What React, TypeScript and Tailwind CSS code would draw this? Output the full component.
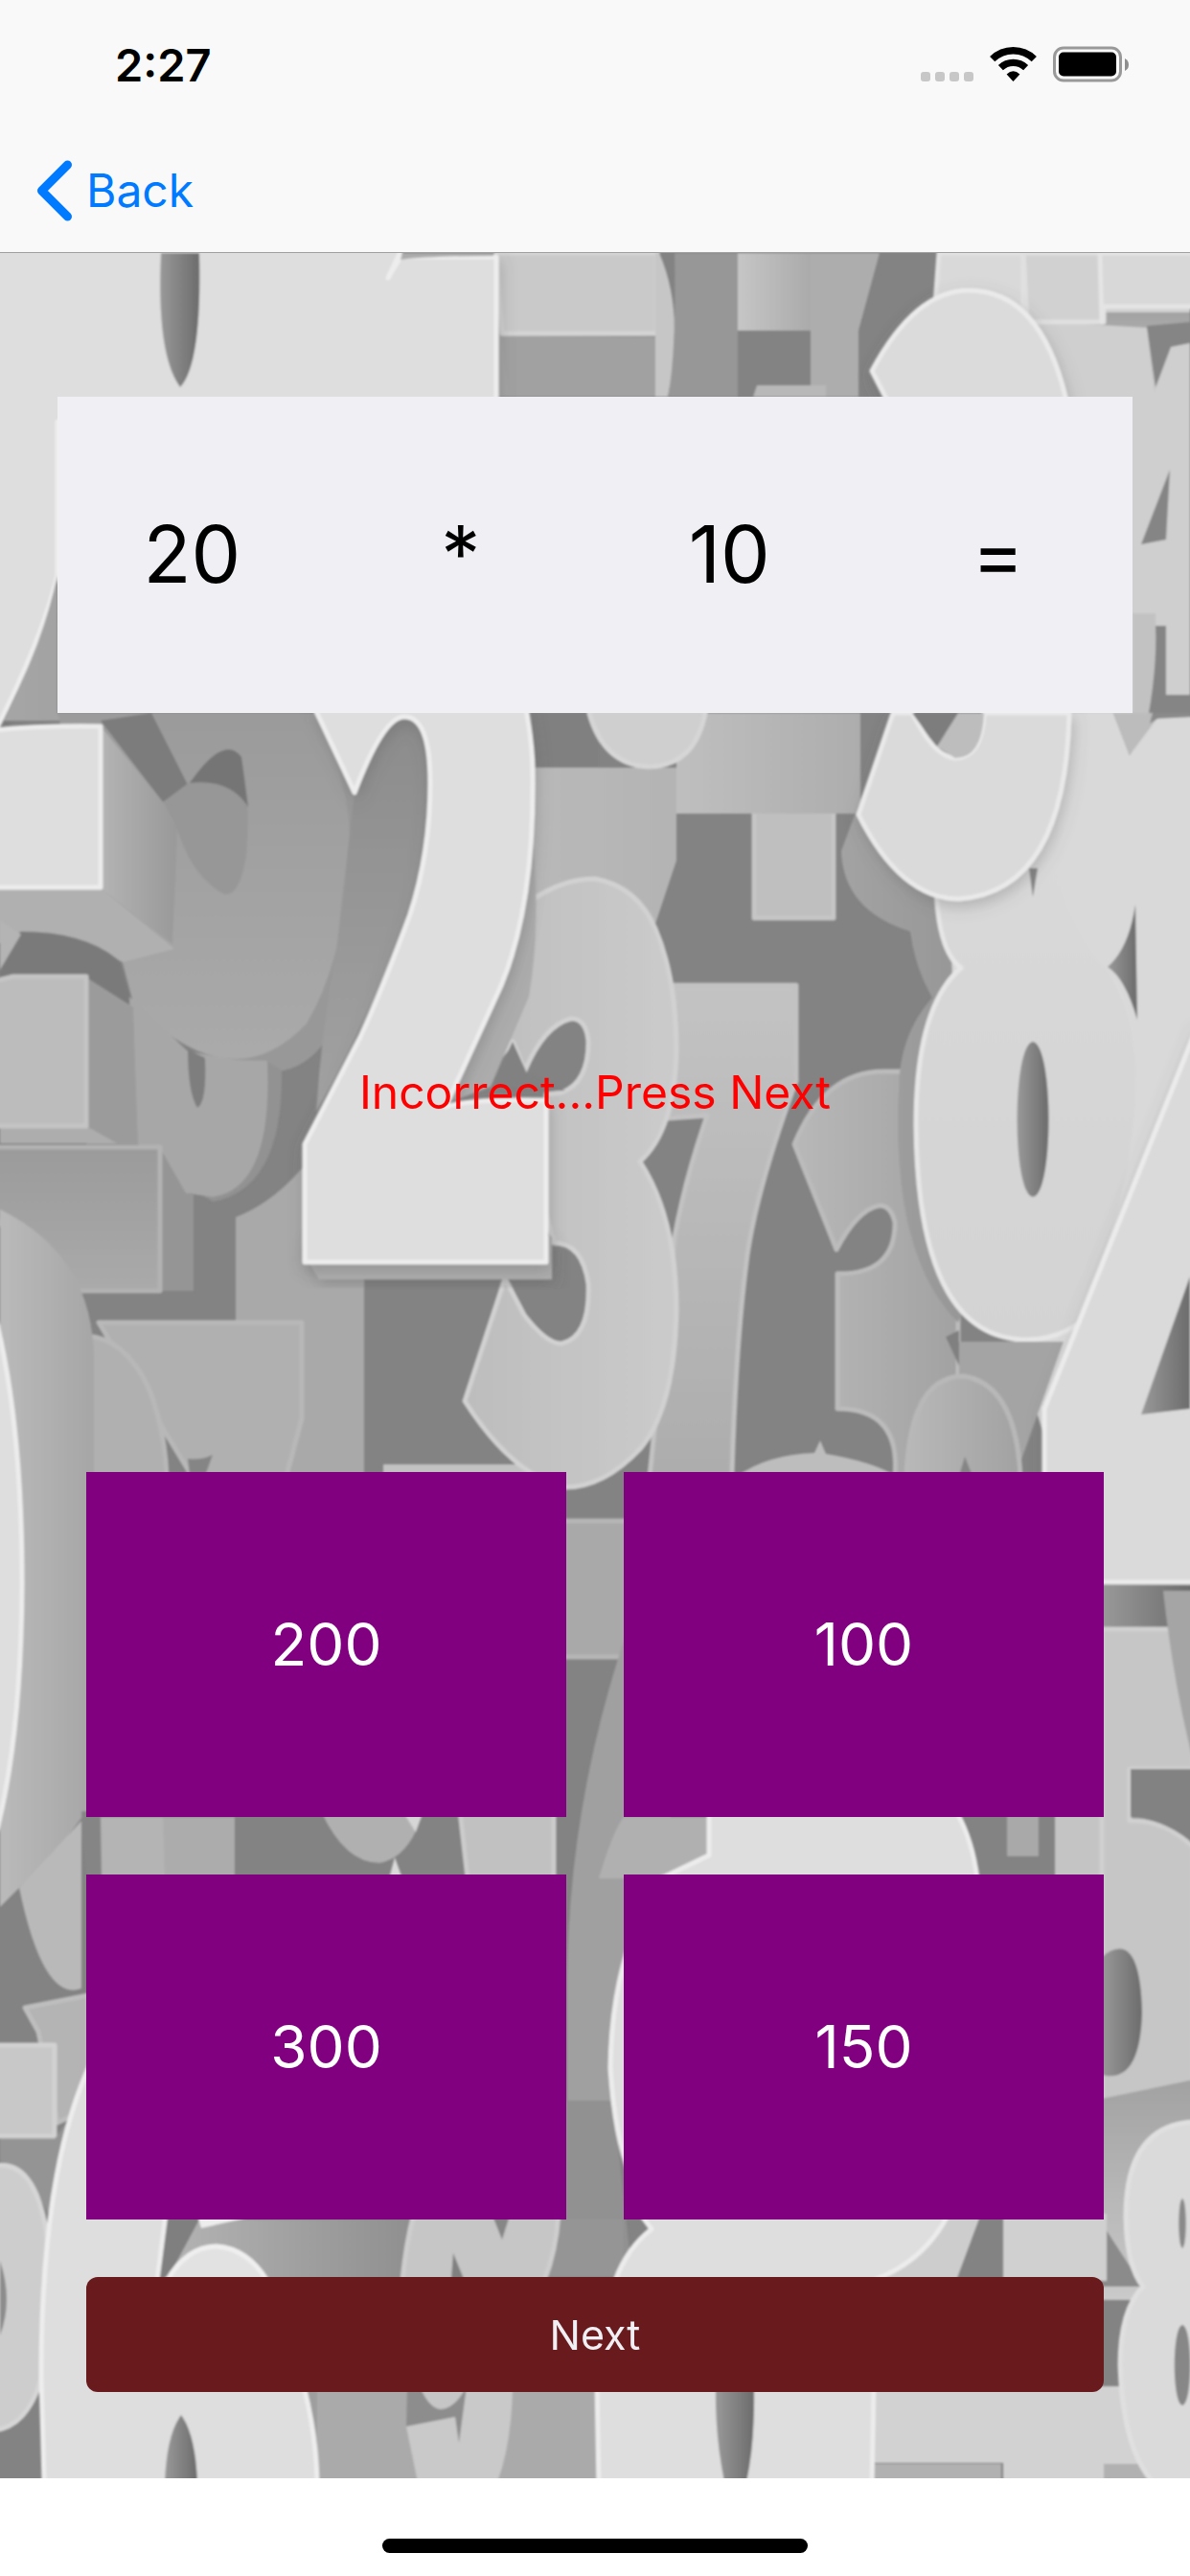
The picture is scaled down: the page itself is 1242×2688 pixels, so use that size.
import React from "react";

type Piece = { d: string; fill: string; edge?: string; shadow?: boolean };

// Sculpted numerals of the backdrop, listed from the back to the front.
const PIECES: Piece[] = [
  // top right clutter
  { d: "M518 264H686V414H518Z", fill: "url(#mid)" },
  { d: "M518 264H686V348H524Z", fill: "#c9c9c9", edge: "#d4d4d4" },
  { d: "M524 352H686V414H531Z", fill: "#a1a1a1" },
  { d: "M688 264Q704 300 704 345Q704 385 697 414H684V264Z", fill: "#c6c6c6" },
  { d: "M704 264H770V414H697Q706 370 704 264Z", fill: "#979797" },
  { d: "M770 264H850V345H770Z", fill: "url(#lightToMid)" },
  { d: "M846 264H918L896 345V414H846Z", fill: "#adadad" },
  { d: "M790 402H862V414H786Z", fill: "#b8b8b8" },
  { d: "M1068 264H1242V744H1100Z", fill: "#cfcfcf" },
  { d: "M1080 335H1150V326H1242V350L1222 362L1205 410L1197 342Z", fill: "url(#downFade)" },
  { d: "M1197 340L1242 336V358L1222 362L1206 404Z", fill: "#858585" },
  { d: "M980 264H1068V345H974Z", fill: "#d9d9d9", edge: "#e2e2e2" },
  { d: "M1068 264H1152V336H1072Z", fill: "#d1d1d1", edge: "#e0e0e0" },
  { d: "M1148 264H1246V320H1150V336Z", fill: "#d8d8d8", edge: "#e4e4e4" },
  { d: "M1221 490L1217 563L1191 568Z", fill: "#858585" },
  { d: "M1182 640H1206Q1208 700 1200 760H1182Z", fill: "#c2c2c2" },
  { d: "M1206 653H1217V725H1242V760H1196Q1208 700 1206 653Z", fill: "#858585" },
  {
    d: "M924 414L910 387Q955 303 1011 303Q1085 303 1112 414V430H930Z",
    fill: "#dbdbdb",
    edge: "#eaeaea",
    shadow: true,
  },
  // upper left numeral
  {
    d: "M-6 258H420L405 290L418 268H518V440H60V600Q45 665 -6 765Z",
    fill: "#dedede",
    edge: "#ededed",
    shadow: true,
  },
  { d: "M420 264H515V267Q450 267 418 271Z", fill: "#ababab" },
  { d: "M168 264H208Q211 380 188 404Q163 370 168 264Z", fill: "url(#hole)" },
  // wedge between the numeral and the prompt panel
  { d: "M60 600V744H400V1000H150L100 752H4Q45 670 60 600Z", fill: "url(#mid)" },

  // grey ring on the left
  { d: "M330 744L378 840V960Q360 1110 290 1118L230 1105Z", fill: "#989898" },
  {
    d: "M60 744H331Q370 830 364 893Q360 1000 320 1068Q285 1105 246 1105Q194 1105 139 1046L100 900Z",
    fill: "url(#ring)",
  },
  { d: "M105 752L158 744L196 819L170 837Z", fill: "#7b7b7b" },
  { d: "M170 837L198 816Q234 770 253 796Q262 842 257 893Q250 936 234 933Q200 915 185 865Z", fill: "#979797" },
  { d: "M198 817Q234 765 252 790L259 842Q240 812 198 817Z", fill: "#757575" },
  { d: "M105 758L170 837L185 865L180 985L104 926Z", fill: "url(#sideFade)" },
  { d: "M-4 926H104L182 990L128 1004Q60 970 -4 985Z", fill: "#b0b0b0" },
  { d: "M-6 762Q40 757 105 758V926H-6Z", fill: "#dedede", edge: "#ececec" },
  { d: "M0 985L22 972Q90 972 125 1003L140 1052L93 1022H0Z", fill: "#7a7a7a" },
  { d: "M0 960L22 975L0 1012Z", fill: "#b4b4b4" },

  // thin ring under it
  { d: "M278 1107L294 1117Q296 1240 222 1254L200 1240Z", fill: "#929292" },
  { d: "M135 1040L196 1097L246 1106L279 1107Q285 1240 222 1249L194 1245L140 1190Z", fill: "#a7a7a7" },
  { d: "M196 1095L214 1104Q216 1150 206 1156Q196 1140 196 1095Z", fill: "#7e7e7e" },
  { d: "M90 1020L139 1051L144 1194H90Z", fill: "#9b9b9b" },
  { d: "M0 1175H90L122 1193H0Z", fill: "#adadad" },
  { d: "M-6 1024L14 1019H90V1175H-6Z", fill: "#bcbcbc", edge: "#c4c4c4" },
  { d: "M166 1196L194 1245H202V1347H166Z", fill: "#959595" },
  { d: "M-6 1197H167V1347H60L-6 1270Z", fill: "url(#ring)", edge: "#b2b2b2" },

  // angular pieces lower left
  { d: "M317 1217L380 1335V1540H246V1270Q285 1255 317 1217Z", fill: "#a9a9a9" },
  { d: "M103 1380H315V1480L299 1540H200Z", fill: "#b0b0b0", edge: "#b8b8b8" },
  { d: "M90 1394Q130 1396 155 1448Q172 1490 174 1540H90Z", fill: "#b0b0b0", edge: "#b8b8b8" },
  { d: "M196 1522Q210 1524 222 1518L214 1540H198Z", fill: "#858585" },
  { d: "M0 1262Q98 1310 98 1420V1880L60 1930L0 1990Z", fill: "url(#tube)" },
  { d: "M-6 1370Q23 1480 23 1653Q22 1820 -6 1920Z", fill: "#dedede", edge: "#ececec" },

  // middle column
  { d: "M556 744H625V801H556Z", fill: "#808080" },
  { d: "M552 801H706V898L684 964V1010H545Z", fill: "url(#lightToMidR)" },
  { d: "M787 840H870V958H787Z", fill: "#bfbfbf", edge: "#c6c6c6" },
  { d: "M706 744H898V849H706Z", fill: "url(#plus)" },
  { d: "M676 682A58 58 0 0 1 736 744Q725 800 676 800Q630 798 615 744Z", fill: "#cfcfcf", edge: "#d6d6d6" },
  {
    d: "M690 1028H831V1128Q790 1240 780 1310Q768 1400 764 1540H678L704 1291Q715 1230 738 1164L698 1167Z",
    fill: "url(#seven)",
    edge: "#c2c2c2",
  },
  { d: "M400 1528H600V1545H400Z", fill: "#c2c2c2" },
  {
    d: "M541 950Q580 917 621 917Q665 925 684 969Q706 1020 706 1097Q704 1180 668 1212Q706 1270 706 1367Q704 1470 668 1512Q630 1552 590 1552Q535 1540 485 1462L527 1334L547 1372Q570 1402 586 1402Q616 1395 614 1340Q608 1297 578 1297L560 1230L570 1142L586 1140Q614 1130 614 1087Q612 1063 596 1063Q568 1070 548 1117L535 1087L500 1130Z",
    fill: "url(#three)",
    edge: "#d1d1d1",
  },
  { d: "M535 1087L550 1120L590 1138L510 1140Z", fill: "#818181" },
  { d: "M554 850Q566 960 552 1040L512 1134L470 1150Z", fill: "#acacac" },

  // right centre
  {
    d: "M829 1194Q860 1118 922 1118H1000V1400L1000 1540H934Q940 1470 874 1470V1329Q934 1330 934 1276Q930 1258 918 1258Q895 1262 873 1304Z",
    fill: "url(#small)",
    edge: "#bbbbbb",
  },
  { d: "M932 744L878 888Q880 950 950 972Q955 1010 973 1041Q938 1080 938 1138Q930 1310 1000 1380L1080 1200V900Z", fill: "url(#under)" },
  { d: "M1116 744H1162L1179 788L1203 750L1246 748V1500H1090L1000 1200L990 900Z", fill: "#d9d9d9" },
  {
    d: "M977 900Q975 990 1003 1010Q956 1050 956 1174Q958 1398 1072 1398Q1190 1395 1192 1168Q1190 1050 1156 1009L1090 820Z",
    fill: "url(#eight)",
    edge: "#e6e6e6",
  },
  { d: "M1080 800L1246 790V1110L1115 1390Q1190 1250 1185 1100Q1175 1030 1152 1009Q1100 960 1080 800Z", fill: "#d9d9d9" },
  { d: "M1156 1009Q1178 990 1185 944L1187 1064Q1174 1020 1156 1009Z", fill: "url(#hole)" },
  { d: "M1162 744H1212L1179 788Z", fill: "#bcbcbc" },
  { d: "M1203 744H1242V748H1211L1200 755Z", fill: "#8a8a8a" },
  { d: "M1074 906H1083L1078 936Z", fill: "#858585" },
  { d: "M1078 1087C1100 1090 1100 1247 1078 1249C1056 1247 1056 1090 1078 1087Z", fill: "url(#hole)" },
  {
    d: "M932 744L896 850Q940 938 1001 938Q1112 930 1116 744H1027Q1025 791 997 791Q975 790 952 744Z",
    fill: "#dadada",
    edge: "#e9e9e9",
    shadow: true,
  },
  { d: "M952 744H1000L977 778Z", fill: "#7d7d7d" },
  { d: "M1000 744H1027Q1025 791 997 791L978 779Z", fill: "#bdbdbd" },
  { d: "M1001 1400H1110L1060 1540H1001Z", fill: "#a4a4a4" },
  { d: "M987 1395L1001 1388V1425Z", fill: "#808080" },
  { d: "M946 1540Q950 1436 1006 1436Q1060 1445 1065 1540Z", fill: "url(#small)", edge: "#b8b8b8" },
  { d: "M1007 1520L1015 1540H1001Z", fill: "#858585" },
  { d: "M770 1540Q800 1518 850 1516L856 1503L862 1517Q910 1525 935 1540Z", fill: "#bdbdbd" },
  {
    d: "M1250 1070L1090 1470V1651H1250Z",
    fill: "#dadada",
    edge: "#ebebeb",
    shadow: true,
  },
  { d: "M1242 1332L1191 1476L1242 1470Z", fill: "url(#hole)" },

  // large two
  { d: "M370 827Q400 748 422 748Q449 750 449 817Q450 900 428 954Q376 1082 330 1160Q335 1080 350 1000Z", fill: "url(#shade)" },
  { d: "M318 1310L333 1335H576V1290H318Z", fill: "#adadad", shadow: true },
  {
    d: "M328 738H549Q556 780 556 806Q558 960 515 1046L465 1155Q490 1146 570 1148V1317H318V1194L376 1082Q400 1030 428 954Q449 890 449 817Q449 748 422 748Q400 748 370 827Z",
    fill: "#dedede",
    edge: "#ededed",
    shadow: true,
  },

  // left strip beside the answers
  { d: "M85 1890H106V1990Q88 1980 85 1890Z", fill: "#858585" },
  { d: "M20 1970L85 1900V2075Q45 2090 20 1970Z", fill: "#b9b9b9" },
  { d: "M26 2095L92 2082V2200L60 2215L40 2120Z", fill: "#b4b4b4", edge: "#bebebe" },
  { d: "M-6 2134H57V2229H-6Z", fill: "#c8c8c8", edge: "#d2d2d2" },
  { d: "M0 2232H57L71 2212L50 2310Q30 2262 0 2255Z", fill: "#949494" },
  { d: "M-6 2260Q52 2250 54 2400Q50 2530 -6 2536Z", fill: "#cdcdcd", edge: "#d6d6d6" },
  { d: "M0 2359Q14 2400 0 2437Z", fill: "#8c8c8c" },

  // band between the answer rows
  { d: "M105 1896H172V1960H106Z", fill: "#b4b4b4" },
  { d: "M170 1896H245V1960H172Z", fill: "#acacac" },
  { d: "M335 1890Q360 1944 396 1944Q420 1940 434 1911L420 1890Z", fill: "#b0b0b0" },
  { d: "M420 1890H442L434 1912Z", fill: "#d6d6d6" },
  { d: "M412 1938L420 1960H406Z", fill: "#dadada" },
  { d: "M480 1890H578V1960H488Z", fill: "#c1c1c1", edge: "#cccccc" },

  // gutter between the answer columns
  { d: "M585 1587H655V1729H585Z", fill: "#a9a9a9", edge: "#b6b6b6" },
  { d: "M655 1700Q594 1880 592 2060V2192H700V1700Z", fill: "#a0a0a0" },
  { d: "M585 2192H640L660 2376H585Z", fill: "#919191" },
  { d: "M651 1896H740V1960H625Q640 1910 651 1896Z", fill: "#b0b0b0" },
  { d: "M740 1890H998Q1015 1920 1020 1960H690L740 1936Z", fill: "#dedede", edge: "#ececec" },
  { d: "M1051 1890H1084V1937H1051Z", fill: "#a9a9a9" },
  { d: "M1101 1890H1160V1960H1101Z", fill: "#c4c4c4" },
  { d: "M660 2020Q638 2080 637 2158Q642 2235 660 2275Z", fill: "#dedede", edge: "#ececec" },

  // right strip beside the answers
  { d: "M1150 1654H1246V1700H1150Z", fill: "url(#hole)" },
  { d: "M1150 1700H1246V1846H1179V1900Q1215 1898 1246 1928V2260H1150Z", fill: "#c6c6c6", edge: "#d0d0d0" },
  { d: "M1214 1660H1246V1840Q1225 1760 1214 1660Z", fill: "#a5a5a5" },
  { d: "M1180 1846H1246V1924Q1215 1898 1180 1896Z", fill: "#828282" },
  { d: "M1150 2042Q1190 2010 1192 2100Q1190 2175 1150 2165Z", fill: "url(#hole)" },
  { d: "M1150 2190L1246 2170V2400H1150Z", fill: "url(#downFade)" },
  { d: "M1150 2320L1193 2386H1150Z", fill: "#8b8b8b" },

  // lower edge
  { d: "M172 2316H440V2590H172Z", fill: "url(#lower)" },
  { d: "M331 2490H623V2590H331Z", fill: "#aaaaaa" },
  { d: "M582 2316H650V2376H572Z", fill: "#959595" },
  { d: "M172 2316H208L176 2376H164Z", fill: "#7f7f7f" },
  { d: "M206 2312L210 2325L268 2312Z", fill: "#ededed" },
  { d: "M432 2310H583Q580 2350 568 2380H420Q424 2340 432 2310Z", fill: "#c6c6c6", edge: "#cecece" },
  { d: "M514 2312H532L524 2337Z", fill: "#868686" },
  { d: "M473 2351L484 2378H471Z", fill: "#808080" },
  { d: "M96 2150Q43 2260 43 2480L46 2590H331Q330 2540 317 2490L164 2380L173 2310V2150Z", fill: "#dedede", edge: "#ededed" },
  { d: "M174 2380Q195 2344 226 2344Q258 2346 279 2380Z", fill: "#e2e2e2", edge: "#efefef" },
  { d: "M189 2520Q204 2540 206 2590H172Q174 2540 189 2520Z", fill: "url(#hole)" },
  { d: "M425 2490H490L479 2552L475 2522L424 2532Z", fill: "#8d8d8d" },
  { d: "M438 2490Q448 2514 461 2514Q476 2512 487 2490Z", fill: "#c6c6c6" },
  { d: "M487 2490H535Q534 2550 519 2590H436L424 2532L475 2522L479 2549Z", fill: "#c9c9c9" },
  { d: "M1047 2310H1155V2380H1047Z", fill: "#d0d0d0" },
  { d: "M912 2490H1175L1210 2590H1047V2570H905Z", fill: "#d2d2d2" },
  { d: "M905 2571H1045V2590H905Z", fill: "#b1b1b1" },
  { d: "M1152 2571H1200V2590H1152Z", fill: "#b1b1b1" },
  { d: "M987 2310H1024L998 2380H900Z", fill: "#cdcdcd" },
  { d: "M668 2310L680 2326Q655 2345 642 2380H910Q965 2360 990 2310Z", fill: "#dedede", edge: "#ececec" },
  { d: "M623 2485L625 2594H910L912 2485Z", fill: "#dedede", edge: "#ececec" },
  { d: "M747 2490H787Q788 2550 779 2590H756Q746 2540 747 2490Z", fill: "url(#hole)" },
  {
    d: "M1250 2214Q1175 2215 1175 2313Q1176 2365 1193 2386Q1169 2410 1169 2468Q1172 2560 1207 2594H1250Z",
    fill: "#dadada",
    edge: "#e0e0e0",
  },
  { d: "M1234 2294C1239 2296 1239 2344 1234 2346C1229 2344 1229 2296 1234 2294Z", fill: "#8a8a8a" },
  { d: "M1234 2426C1245 2428 1245 2508 1234 2510C1223 2508 1223 2428 1234 2426Z", fill: "#878787" },
];

function Fade({ id, from, to, down }: { id: string; from: string; to: string; down?: boolean }) {
  return (
    <linearGradient id={id} x1="0" y1="0" x2={down ? "0" : "1"} y2={down ? "1" : "0"}>
      <stop offset="0" stopColor={from} />
      <stop offset="1" stopColor={to} />
    </linearGradient>
  );
}

function Backdrop() {
  return (
    <svg
      className="absolute inset-0 h-full w-full"
      viewBox="0 264 1242 2322"
      preserveAspectRatio="none"
      aria-hidden="true"
    >
      <defs>
        <Fade id="mid" from="#a6a6a6" to="#8f8f8f" />
        <Fade id="hole" from="#999999" to="#6c6c6c" />
        <Fade id="lightToMid" from="#c6c6c6" to="#a9a9a9" />
        <Fade id="lightToMidR" from="#b9b9b9" to="#b4b4b4" />
        <Fade id="plus" from="#bfbfbf" to="#adadad" />
        <Fade id="downFade" from="#a2a2a2" to="#cacaca" down />
        <Fade id="ring" from="#9b9b9b" to="#aaaaaa" down />
        <Fade id="sideFade" from="#b4b4b4" to="#999999" />
        <Fade id="tube" from="#bababa" to="#a6a6a6" />
        <Fade id="seven" from="#c3c3c3" to="#adadad" down />
        <Fade id="three" from="#bdbdbd" to="#cbcbcb" />
        <Fade id="small" from="#b8b8b8" to="#a2a2a2" />
        <Fade id="under" from="#a3a3a3" to="#8f8f8f" />
        <Fade id="eight" from="#dadada" to="#d3d3d3" down />
        <Fade id="shade" from="#8c8c8c" to="#a2a2a2" down />
        <Fade id="lower" from="#b4b4b4" to="#8e8e8e" />
        <filter id="soft" x="-5%" y="-5%" width="110%" height="110%">
          <feGaussianBlur stdDeviation="1" />
        </filter>
        <filter id="cast" x="-20%" y="-20%" width="140%" height="140%">
          <feDropShadow dx="2" dy="6" stdDeviation="8" floodColor="#555555" floodOpacity="0.3" />
        </filter>
      </defs>
      <rect x="0" y="264" width="1242" height="2322" fill="#838383" />
      <g filter="url(#soft)">
        {PIECES.map((p, i) => (
          <path
            key={i}
            d={p.d}
            fill={p.fill}
            stroke={p.edge ?? "none"}
            strokeWidth={5}
            strokeLinejoin="round"
            filter={p.shadow ? "url(#cast)" : undefined}
          />
        ))}
      </g>
    </svg>
  );
}

function StatusIcons() {
  return (
    <div className="flex items-center gap-[17px]">
      <svg className="h-[38px] w-[55px]" viewBox="0 0 55 38" fill="#c7c7c7" aria-hidden="true">
        <rect x="0" y="27" width="10" height="10" rx="3" />
        <rect x="15" y="27" width="10" height="10" rx="3" />
        <rect x="30" y="27" width="10" height="10" rx="3" />
        <rect x="45" y="27" width="10" height="10" rx="3" />
      </svg>
      <svg className="h-[38px] w-[49px]" viewBox="0 0 49 38" aria-hidden="true">
        <path d="M2.7 13.7A31 31 0 0 1 46.3 13.7" fill="none" stroke="#000" strokeWidth="7.4" />
        <path d="M11.4 22.6A18.8 18.8 0 0 1 37.6 22.6" fill="none" stroke="#000" strokeWidth="7.2" />
        <path d="M17.6 29.6Q24.500 23 31.400 29.600L24.500 37Z" fill="#000" />
      </svg>
      <svg className="h-[38px] w-[80px]" viewBox="0 0 80 38" aria-hidden="true">
        <rect x="1.500" y="2" width="69" height="34" rx="9.500" fill="none" stroke="#999" strokeWidth="3" />
        <rect x="6" y="6.500" width="60" height="25" rx="5" fill="#000" />
        <path d="M75 13Q79 15 79 19.500Q79 24 75 26Z" fill="#8e8e8e" />
      </svg>
    </div>
  );
}

const ANSWERS = ["200", "100", "300", "150"];
const PROMPT = ["20", "*", "10", "="];

export default function App() {
  return (
    <div className="flex min-h-screen flex-col bg-white font-['Inter',sans-serif]">
      <header className="border-b border-[#a0a0a0] bg-[#f9f9f9]">
        <div className="flex h-[134px] items-center justify-between pr-[63px] pl-[120px]">
          <span className="text-[47px] leading-none font-semibold text-black">2:27</span>
          <StatusIcons />
        </div>
        <nav className="flex h-[129px] items-center pl-[38px]">
          <button type="button" className="flex items-center gap-[14px] text-[48px] leading-none text-[#007aff]">
            <svg className="h-[64px] w-[38px]" viewBox="0 0 38 64" fill="none" aria-hidden="true">
              <path
                d="M32.500 5L5.500 32L32.500 59"
                stroke="currentColor"
                strokeWidth="9"
                strokeLinecap="round"
                strokeLinejoin="round"
              />
            </svg>
            Back
          </button>
        </nav>
      </header>

      <main className="relative flex flex-1 flex-col">
        <Backdrop />
        <div className="relative flex flex-1 flex-col pt-[150px] pb-[90px]">
          <section className="mx-[60px] grid h-[330px] grid-cols-4 place-items-center bg-[#efeff4] text-[82px] leading-none text-black">
            {PROMPT.map((t) => (
              <span key={t}>{t}</span>
            ))}
          </section>

          <div className="flex flex-1 items-center justify-center">
            <p role="status" className="text-[48px] leading-none text-[#ff0000]">
              Incorrect...Press Next
            </p>
          </div>

          <div className="mx-[90px] grid grid-cols-2 gap-[60px]">
            {ANSWERS.map((a) => (
              <button key={a} type="button" className="h-[360px] bg-[#800080] text-[62px] leading-none text-white">
                {a}
              </button>
            ))}
          </div>

          <button
            type="button"
            className="mx-[90px] mt-[60px] h-[120px] rounded-xl bg-[#681a1c] text-[43px] leading-none text-[#efeff4]"
          >
            Next
          </button>
        </div>
      </main>

      <footer className="flex h-[102px] items-end justify-center pb-6">
        <div className="h-[15px] w-[444px] rounded-full bg-black" />
      </footer>
    </div>
  );
}
